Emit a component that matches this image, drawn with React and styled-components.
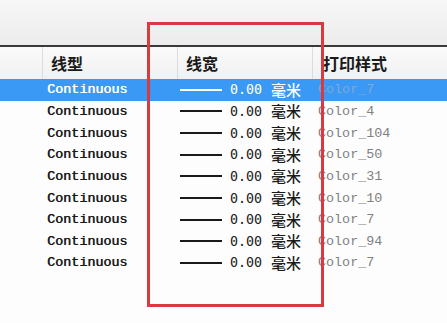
import React from 'react';
import styled, { createGlobalStyle } from 'styled-components';

const Global = createGlobalStyle`
  html, body { margin: 0; padding: 0; background: #ffffff; }
  body { width: 447px; height: 323px; overflow: hidden; }
`

const Screen = styled.div`
  position: relative;
  width: 447px;
  height: 323px;
  overflow: hidden;
  background: #fdfdfd;
  display: flex;
  flex-direction: column;
`

const TopBand = styled.div`
  height: 45px;
  background: linear-gradient(#f7f7f7, #ececec);
  border-bottom: 2px solid #3a3a3a;
`

const Grid = styled.div`
  display: grid;
  grid-template-columns: 42px 135px 135px 1fr;
  align-items: center;
  height: ${p => p.$h}px;
  background: ${p => (p.$selected ? '#3a99f4' : 'transparent')};
`

const Header = styled(Grid)`
  background: linear-gradient(#fafafa, #f1f1f1);
  align-items: stretch;
`

const HeadCell = styled.div`
  display: flex;
  align-items: center;
  padding-left: ${p => p.$pad}px;
  border-left: ${p => (p.$first ? 'none' : '1px solid #dcdcdc')};
  font-family: "Noto Sans CJK SC", sans-serif;
  font-size: 16px;
  font-weight: 700;
  color: #1a1a1a;
`

const Cell = styled.div`
  display: flex;
  align-items: center;
  white-space: nowrap;
  padding-left: ${p => p.$pad || 0}px;
  font-family: "Liberation Mono", monospace;
  font-size: 13.4px;
  color: ${p => p.$color};
  text-shadow: ${p => (p.$heavy ? '0.5px 0 0 currentColor' : 'none')};
`

const WidthLine = styled.span`
  display: inline-block;
  width: 42px;
  height: 0;
  border-top: 2px solid ${p => p.$color};
  margin-right: 8px;
`

const Num = styled.span`
  font-family: "DejaVu Sans Mono", monospace;
  font-size: 13.3px;
  margin-right: 9px;
`

const Unit = styled.span`
  font-family: "Noto Sans CJK SC", sans-serif;
  font-size: 15px;
  font-weight: 500;
  line-height: 18px;
`

const Highlight = styled.div`
  position: absolute;
  left: 147px;
  top: 22px;
  width: 171px;
  height: 279px;
  border: 3px solid #d83a40;
`

const rows = ['Color_7', 'Color_4', 'Color_104', 'Color_50', 'Color_31', 'Color_10', 'Color_7', 'Color_94', 'Color_7']

export default function App() {
  return (
    <Screen>
      <Global />
      <TopBand />
      <Header $h={32}>
        <HeadCell $first />
        <HeadCell $pad={8}>线型</HeadCell>
        <HeadCell $pad={8}>线宽</HeadCell>
        <HeadCell $pad={10}>打印样式</HeadCell>
      </Header>
      {rows.map((style, i) => {
        const sel = i === 0
        const fg = sel ? '#ffffff' : '#1a1a1a'
        return (
          <Grid key={i} $h={21.65} $selected={sel}>
            <Cell />
            <Cell $pad={5} $color={fg} $heavy>Continuous</Cell>
            <Cell $pad={3} $color={fg}>
              <WidthLine $color={fg} />
              <Num>0.00</Num>
              <Unit>毫米</Unit>
            </Cell>
            <Cell $pad={6} $color={sel ? '#7fa9d6' : '#808080'}>{style}</Cell>
          </Grid>
        )
      })}
      <Highlight />
    </Screen>
  );
}
